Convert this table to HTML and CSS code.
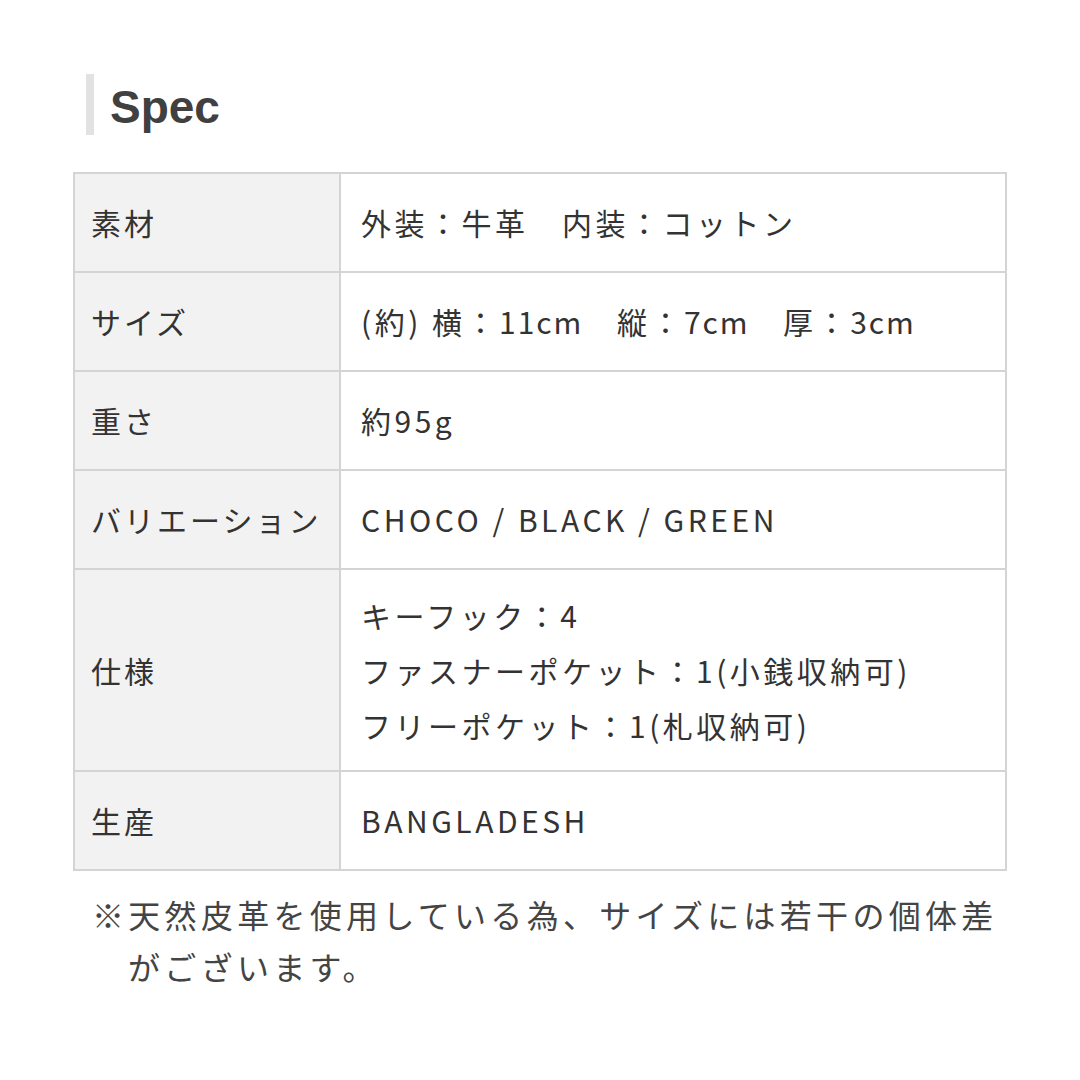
FILE: index.html
```html
<!DOCTYPE html>
<html lang="ja">
<head>
<meta charset="utf-8">
<link rel="stylesheet" href="styles.css">
</head>
<body>
<div class="page">
  <h2 class="heading">Spec</h2>
  <table class="spec">
    <tr><th>素材</th><td>外装：牛革　内装：コットン</td></tr>
    <tr><th>サイズ</th><td>(約) 横：<span class="num">11cm</span>　縦：<span class="num">7cm</span>　厚：<span class="num">3cm</span></td></tr>
    <tr><th>重さ</th><td>約95g</td></tr>
    <tr><th>バリエーション</th><td>CHOCO / BLACK / GREEN</td></tr>
    <tr><th>仕様</th><td class="multi">キーフック：4<br>ファスナーポケット：1(小銭収納可)<br>フリーポケット：1(札収納可)</td></tr>
    <tr><th>生産</th><td>BANGLADESH</td></tr>
  </table>
  <p class="note">※天然皮革を使用している為、サイズには若干の個体差がございます。</p>
</div>
</body>
</html>
```
FILE: styles.css
```css
html, body {
  margin: 0;
  padding: 0;
  background: #fff;
}
.page {
  width: 934px;
  margin-left: 73px;
  padding-top: 74px;
  font-family: "Noto Sans CJK JP", "Noto Sans", sans-serif;
  color: #333;
}
.heading {
  margin: 0 0 37px 13px;
  height: 58px;
  padding-top: 3px;
  border-left: 8px solid #e2e2e2;
  padding-left: 16px;
  font-family: "Liberation Sans", Arial, sans-serif;
  font-weight: bold;
  font-size: 46px;
  line-height: 61px;
  color: #404040;
}
.spec {
  width: 934px;
  border-collapse: collapse;
  border: 2px solid #d4d4d4;
}
.spec th, .spec td {
  border: 2px solid #d4d4d4;
  font-size: 30px;
  letter-spacing: 3.5px;
  font-weight: 400;
  text-align: left;
  vertical-align: middle;
  line-height: 55px;
  height: 99px;
  box-sizing: border-box;
  padding: 0;
}
.spec th {
  width: 266px;
  background: #f2f2f2;
  padding-left: 16px;
  white-space: nowrap;
  letter-spacing: 3px;
}
.spec td {
  padding-left: 20px;
  background: #fff;
}
.spec td.multi {
  height: 202px;
}
.spec .num {
  letter-spacing: 2px;
}
.note {
  margin: 17px 0 0 0;
  padding-left: calc(19px + 1em + 4px);
  text-indent: calc(-1em - 4px);
  font-size: 32px;
  letter-spacing: 4.3px;
  line-height: 52px;
  color: #444;
}
```
